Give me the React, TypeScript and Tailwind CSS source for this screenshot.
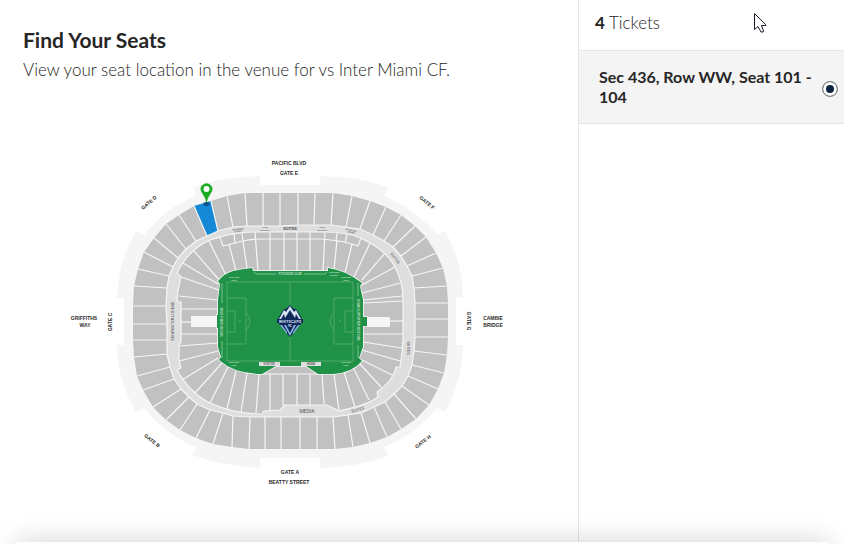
import React, { useState } from 'react';

type Line = [number, number, number, number];

// Upper bowl aisles, clockwise from the top left: outer point, then inner point
const UPPER_AISLES: Line[] = [
  [245, 193, 247, 226], [263, 193, 263, 226], [280, 193, 280, 226], [298, 193, 298, 225],
  [315, 193, 314, 225], [333, 193, 331, 225], [352, 196, 346, 227], [370, 201, 360, 229],
  [386, 207, 373, 235], [401, 215, 384, 241], [415, 226, 393, 247], [426, 237, 401, 256],
  [436, 253, 407, 266], [443, 268, 412, 276], [447, 286, 414, 288], [448, 303, 415, 303],
  [448, 319, 415, 319], [448, 337, 415, 337], [447, 355, 414, 351], [444, 373, 412, 365],
  [438, 389, 408, 376], [429, 405, 402, 386], [416, 419, 394, 394], [401, 429, 385, 402],
  [387, 437, 374, 407], [370, 443, 361, 413], [353, 447, 348, 415], [335, 449, 333, 417],
  [317, 449, 317, 417], [300, 449, 300, 417], [281, 449, 281, 417], [265, 449, 265, 417],
  [249, 449, 250, 417], [232, 447, 233, 416], [213, 444, 223, 413], [196, 438, 210, 410],
  [180, 430, 197, 404], [166, 420, 189, 397], [153, 407, 181, 389], [143, 390, 174, 379],
  [137, 376, 170, 367], [134, 357, 167, 354], [133, 340, 167, 340], [133, 324, 167, 324],
  [133, 306, 166, 306], [134, 286, 167, 288], [138, 269, 169, 276], [144, 252, 173, 267],
  [154, 238, 178, 258], [166, 224, 186, 249], [179, 215, 196, 241], [194, 206, 207, 236],
  [211, 201, 218, 231], [227, 196, 233, 227],
];

const LOWER_AISLES: Line[] = [
  [209, 241, 226, 275], [194, 251, 220, 281], [183, 263, 218, 284], [181, 277, 219, 290],
  [179, 296, 218, 300], [181, 309, 218, 309], [229, 244, 236, 271], [243, 241, 247, 268],
  [255, 232, 258, 271], [270, 232, 270, 271], [284, 232, 284, 271], [297, 232, 297, 271],
  [310, 232, 310, 271], [325, 232, 323, 271], [337, 240, 334, 270], [352, 244, 345, 273],
  [370, 243, 354, 277], [385, 253, 362, 280], [395, 267, 362, 285], [401, 283, 362, 293],
  [402, 296, 363, 300], [403, 301, 363, 303], [403, 321, 390, 321], [403, 334, 363, 334],
  [402, 348, 363, 342], [400, 361, 362, 350], [392, 375, 362, 360], [381, 387, 360, 364],
  [369, 400, 354, 369], [355, 407, 344, 372], [339, 410, 334, 374], [324, 404, 322, 374],
  [310, 405, 310, 374], [297, 405, 297, 374], [283, 406, 283, 374], [270, 410, 270, 374],
  [256, 413, 259, 374], [241, 412, 247, 373], [227, 409, 236, 371], [210, 403, 228, 367],
  [195, 393, 222, 363], [182, 380, 218, 358], [179, 361, 218, 351], [179, 346, 218, 343],
  [181, 334, 218, 334], [181, 322, 191, 322],
  [234, 234, 235, 243], [242, 233, 243, 241], [337, 233, 336, 241], [347, 235, 345, 243],
];

const LOWER_BOWL =
  'M220 237Q238 232 255 232H325Q345 232 361 238L370 243Q388 253 395 267Q403 282 403 300V340L402 353L400 367H396Q394 380 377 392L378 397Q368 404 355 407L339 411L327 405H285L280 410L264 411L262 414Q235 414 210 403Q190 393 177 370L181 368L179 360V343H181V302H178L177 300L178 290L181 277L177 273Q188 250 210 240Z';

const FIELD =
  'M218 281Q225 273 233 271Q242 269 252 268L253 271H328V268Q345 270 362 283L360 286L363 300V317H367V326H363V347L359 358L362 361Q352 373 333 374H318L306 366H276L262 374Q235 374 219 360L221 357L218 347V328H217V315H218V300L220 284Z';

const OUTER_WALL =
  'M260 185H320V176Q360 177 388 187L384 196Q416 209 437 235L445 231Q463 262 463 298H456V345H463Q462 382 445 412L437 408Q416 434 384 447L388 456Q358 467 320 468V458H260V468Q222 466 192 455L196 447Q164 434 144 408L136 412Q118 382 117 345H124V298H117Q118 262 136 231L144 235Q164 209 196 195L193 187Q224 177 260 176Z';

const upperOuter = UPPER_AISLES.map(([x, y]) => `${x},${y}`).join(' ');
const upperInner = UPPER_AISLES.map(([, , x, y]) => `${x},${y}`).join(' ');

const Aisles: React.FC<{ lines: Line[] }> = ({ lines }) => (
  <g stroke="#f6f6f6" strokeWidth="1.2">
    {lines.map(([x1, y1, x2, y2], i) => (
      <line key={i} x1={x1} y1={y1} x2={x2} y2={y2} />
    ))}
  </g>
);

const TeamCrest = () => (
  <g>
    <path d="M290 305L294 309L296 309L300 315L303 321L297 329L290 337L283 329L277 321L280 315L284 309H286Z" fill="#10295a" />
    <path d="M279 319L284 310L286 312L290 306L294 312L296 310L301 319H299L296 314L295 318L290 310L285 318L284 314L281 319Z" fill="#d9e4f2" />
    <path d="M280 325H282L287 332V334ZM300 325H298L293 332V334ZM284 325H286L290 333L294 325H296L290 336Z" fill="#8cb9e6" />
    <rect x="277" y="319" width="26" height="4" fill="#10295a" />
    <text x="290" y="323" fontSize="4" fontWeight="700" fill="#c9d5e8" textAnchor="middle">WHITECAPS</text>
    <text x="290" y="327" fontSize="3" fontWeight="700" fill="#e3eaf4" textAnchor="middle">FC</text>
  </g>
);

const Pitch = () => (
  <g>
    <path d={FIELD} fill="#1f9247" />
    <g fill="none" stroke="#71b986" strokeWidth="0.6">
      <rect x="227" y="282" width="126" height="79" />
      <path d="M290 282V361M227 298H246V344H227M227 311H235V332H227M353 298H334V344H353M353 311H345V332H353" />
      <path d="M246 313Q254 321 246 330M334 313Q326 321 334 330" />
    </g>
    <g fill="none" stroke="#a6d2b2" strokeWidth="0.7">
      <path d="M254 272L256 274H276M304 274H325L327 272M222 283V303M222 341V358M358 283V296M358 345V358" />
    </g>
    <circle cx="240" cy="321" r="0.6" fill="#a6d2b2" />
    <circle cx="340" cy="321" r="0.6" fill="#a6d2b2" />
    <rect x="259" y="362" width="21" height="4" fill="#dedede" />
    <rect x="301" y="362" width="20" height="4" fill="#dedede" />
    <rect x="280" y="362" width="21" height="3" fill="#1f9247" />
    <g fontSize="3" fontWeight="700" textAnchor="middle" fill="#666">
      <text x="269" y="365">VISITOR</text>
      <text x="311" y="365">HOME</text>
    </g>
    <g fontSize="3" fontWeight="700" textAnchor="middle" fill="#b5dabf">
      <text x="290" y="275">PITCHSIDE CLUB</text>
      <text transform="translate(223 322) rotate(-90)">MOTUS FAMILY ZONE</text>
      <text transform="translate(357 320) rotate(90)">HOME SUPPORTER SECTIONS</text>
    </g>
    <g fontSize="2" fontWeight="700" textAnchor="middle" fill="#c6e3ce">
      <text x="234" y="278">PITCHSIDE</text>
      <text x="234" y="281">SUITE</text>
      <text x="334" y="273">PITCHSIDE</text>
      <text x="334" y="276">LOUNGE</text>
      <text x="346" y="278">PITCHSIDE</text>
      <text x="346" y="281">SUITE</text>
      <text x="234" y="363">PITCHSIDE</text>
      <text x="234" y="366">SUITE</text>
      <text x="346" y="363">PITCHSIDE</text>
      <text x="346" y="366">SUITE</text>
    </g>
    <TeamCrest />
  </g>
);

const SeatMap = () => (
  <svg viewBox="0 100 578 400" className="block w-full font-['Roboto',sans-serif]" role="img" aria-label="Seat map">
    <path d={OUTER_WALL} fill="#f5f5f5" />
    <polygon points={upperOuter} fill="#c1c1c1" />
    <polygon points="194,206 211,201 218,232 207,236" fill="#1689d6" />
    <Aisles lines={UPPER_AISLES} />
    <polygon points={upperInner} fill="#dedede" stroke="#f6f6f6" strokeWidth="1.2" strokeLinejoin="round" />
    <path d={LOWER_BOWL} fill="#c1c1c1" stroke="#f6f6f6" strokeWidth="1.2" />
    <path d="M210 240L220 237L223 246L243 241Q250 239 262 239H322Q345 241 358 246L361 238" fill="none" stroke="#f6f6f6" strokeWidth="1.2" />
    <Aisles lines={LOWER_AISLES} />
    <path d="M260 374H320" stroke="#f6f6f6" strokeWidth="1.2" />
    <rect x="191" y="316" width="26" height="11" fill="#f5f5f5" />
    <rect x="367" y="317" width="23" height="10" fill="#f5f5f5" />
    <path d={FIELD} fill="none" stroke="#f6f6f6" strokeWidth="1.6" />
    <Pitch />

    <g fontSize="4" fill="#555" textAnchor="middle">
      <text x="290" y="230" fontWeight="700">SUITES</text>
      <text transform="translate(394 259) rotate(52)">SUITES</text>
      <text transform="translate(407 348) rotate(90)">SUITES</text>
      <text transform="translate(358 411) rotate(-16)">SUITES</text>
      <text transform="translate(174 321) rotate(-90)">EDGEWATER LOUNGE</text>
    </g>
    <text x="307" y="413" fontSize="5" fill="#555" textAnchor="middle">MEDIA</text>
    <g fontSize="2" fontWeight="700" fill="#666" textAnchor="middle">
      <text x="265" y="228">CLUB</text>
      <text x="265" y="231">SECTION A</text>
      <text x="322" y="228">CLUB</text>
      <text x="322" y="231">SECTION B</text>
      <text transform="translate(238 230) rotate(-6)">BUDWEISER</text>
      <text transform="translate(238 232) rotate(-6)">LOUNGE</text>
      <text transform="translate(351 231) rotate(12)">BUDWEISER</text>
      <text transform="translate(351 233) rotate(12)">LOUNGE</text>
    </g>

    <g className="font-['Liberation_Sans',sans-serif]" fontSize="5" fontWeight="700" fill="#2b2b2b" textAnchor="middle">
      <text x="289" y="165">PACIFIC BLVD</text>
      <text x="289" y="175">GATE E</text>
      <text x="290" y="474">GATE A</text>
      <text x="289" y="484">BEATTY STREET</text>
      <text x="84" y="320">GRIFFITHS</text>
      <text x="85" y="327">WAY</text>
      <text x="493" y="320">CAMBIE</text>
      <text x="493" y="327">BRIDGE</text>
      <text transform="translate(112 322) rotate(-90)">GATE C</text>
      <text transform="translate(467 321) rotate(90)">GATE G</text>
      <text transform="translate(150 204) rotate(-40)">GATE D</text>
      <text transform="translate(426 204) rotate(40)">GATE F</text>
      <text transform="translate(151 442) rotate(38)">GATE B</text>
      <text transform="translate(424 443) rotate(-38)">GATE H</text>
    </g>

    <ellipse cx="206.500" cy="204" rx="3" ry="2" fill="#0d4f86" />
    <path d="M206.500 203Q205 197 202 193Q199 188 202 185.500Q206.500 181 211 185.500Q214 188 211 193Q208 197 206.500 203Z" fill="#1cae22" />
    <circle cx="206.500" cy="189" r="3" fill="#fff" />
  </svg>
);

const tickets = [{ id: 't1', label: 'Sec 436, Row WW, Seat 101 - 104' }];

export default function App() {
  const [selected, setSelected] = useState('t1');

  return (
    <div className="min-h-screen flex flex-col overflow-hidden bg-white font-['Lato',sans-serif] text-[#262626]">
      <div className="flex flex-1">
        <main className="flex-1 min-w-0">
          <header className="px-[23px] pt-7 pb-[18px]">
            <h1 className="text-[21px] leading-6 font-bold">Find Your Seats</h1>
            <p className="mt-1.5 text-[17px] leading-6 font-light">View your seat location in the venue for vs Inter Miami CF.</p>
          </header>
          <SeatMap />
        </main>

        <aside className="relative w-[266px] shrink-0 border-l border-[#e5e5e5]">
          <h2 className="h-[51px] border-b border-[#e5e5e5] px-4 pt-[11px] text-[17px] leading-6 font-light">
            <b className="font-bold">4</b> Tickets
          </h2>
          {tickets.map(ticket => (
            <label
              key={ticket.id}
              htmlFor={ticket.id}
              className="flex items-center justify-between border-b border-[#e5e5e5] bg-[#f4f4f4] py-4 pl-5 pr-1.5"
            >
              <span className="w-[216px] text-base leading-5 font-bold">{ticket.label}</span>
              <input
                type="radio"
                id={ticket.id}
                name="ticket"
                checked={selected === ticket.id}
                onChange={() => setSelected(ticket.id)}
                className="mt-1 size-4 shrink-0 appearance-none rounded-full border border-[#8a8a8a] bg-white shadow-[inset_0_0_0_3px_#fff] checked:bg-[#0b2340]"
              />
            </label>
          ))}
          <svg viewBox="0 0 13 20" className="absolute left-[175px] top-[13px] w-[13px] h-5 pointer-events-none" aria-hidden="true">
            <path d="M0.500 0.500V16.500L4 13.500L7 19H9L9.500 18L7.500 12.500H12L11.500 11.500Z" fill="#fff" stroke="#1b1b2b" />
          </svg>
        </aside>
      </div>

      <footer className="relative h-0.5 bg-white">
        <div className="absolute inset-x-4 top-0 h-16 bg-white shadow-[0_0_28px_rgba(0,0,0,0.18)]" />
      </footer>
    </div>
  );
}
